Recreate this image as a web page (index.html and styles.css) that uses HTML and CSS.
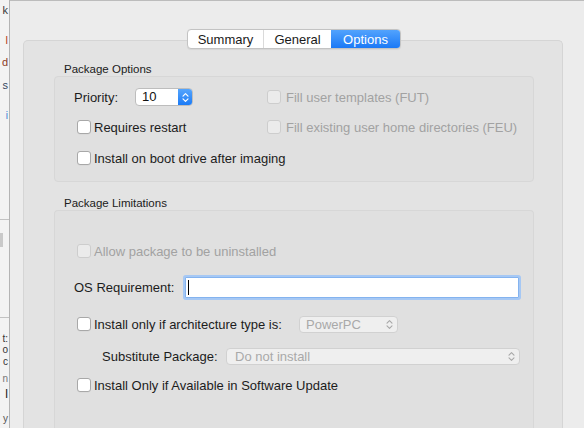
FILE: index.html
```html
<!DOCTYPE html>
<html>
<head>
<meta charset="utf-8">
<link rel="stylesheet" href="styles.css">
</head>
<body>
<div class="desk">
  <div class="behind">
    <span class="frag f1">k</span>
    <span class="frag f2">l</span>
    <span class="frag f3">d</span>
    <span class="frag f4">s</span>
    <span class="frag f5">i</span>
    <span class="rule r1"></span>
    <span class="blk"></span>
    <span class="rule r2"></span>
    <span class="frag f6">t:</span>
    <span class="frag f7">o</span>
    <span class="frag f8">c</span>
    <span class="frag f9">n</span>
    <span class="frag f10">l</span>
    <span class="frag f11">y</span>
  </div>
  <div class="window">
    <div class="tabs-row">
      <div class="seg">
        <span class="tab t-sum">Summary</span>
        <span class="tab t-gen">General</span>
        <span class="tab t-opt on">Options</span>
      </div>
    </div>
    <div class="panel">
      <div class="group">
        <div class="gtitle">Package Options</div>
        <div class="gbox box1">
          <div class="row">
            <span class="lbl-pri">Priority:</span>
            <div class="stepper">
              <span class="val">10</span>
              <span class="arrows">
                <svg width="7" height="11" viewBox="0 0 7 11"><path d="M1 4.2 L3.5 1.7 L6 4.2 M1 6.8 L3.5 9.3 L6 6.8" fill="none" stroke="#fff" stroke-width="1.2" stroke-linecap="round" stroke-linejoin="round"/></svg>
              </span>
            </div>
          </div>
          <div class="row"><span class="cb dis"></span><span class="dis-t">Fill user templates (FUT)</span></div>
          <div class="row ind"><span class="cb"></span><span>Requires restart</span></div>
          <div class="row"><span class="cb dis"></span><span class="dis-t">Fill existing user home directories (FEU)</span></div>
          <div class="row ind r3"><span class="cb"></span><span>Install on boot drive after imaging</span></div>
        </div>
      </div>
      <div class="group grow">
        <div class="gtitle">Package Limitations</div>
        <div class="gbox box2">
          <div class="row ind"><span class="cb dis"></span><span class="dis-t">Allow package to be uninstalled</span></div>
          <div class="row os">
            <span class="lbl-os">OS Requirement:</span>
            <div class="field"><span class="caret"></span></div>
          </div>
          <div class="row ind arch">
            <span class="cb"></span><span class="archlbl">Install only if architecture type is:</span>
            <div class="popup p-arch"><span>PowerPC</span>
              <svg width="7" height="11" viewBox="0 0 7 11"><path d="M1 4.2 L3.5 1.7 L6 4.2 M1 6.8 L3.5 9.3 L6 6.8" fill="none" stroke="#a8a8a8" stroke-width="1.1" stroke-linecap="round" stroke-linejoin="round"/></svg>
            </div>
          </div>
          <div class="row subst">
            <span class="lbl-sub">Substitute Package:</span>
            <div class="popup p-sub"><span>Do not install</span>
              <svg width="7" height="11" viewBox="0 0 7 11"><path d="M1 4.2 L3.5 1.7 L6 4.2 M1 6.8 L3.5 9.3 L6 6.8" fill="none" stroke="#a8a8a8" stroke-width="1.1" stroke-linecap="round" stroke-linejoin="round"/></svg>
            </div>
          </div>
          <div class="row ind sw"><span class="cb"></span><span>Install Only if Available in Software Update</span></div>
        </div>
      </div>
    </div>
  </div>
</div>
</body>
</html>
```
FILE: styles.css
```css
* { box-sizing: border-box; }
html, body { margin: 0; padding: 0; }
body {
  width: 584px;
  height: 428px;
  overflow: hidden;
  background: #ececec;
  font-family: "Liberation Sans", Arial, sans-serif;
  font-size: 13px;
  color: #1c1c1c;
}
.desk { display: flex; height: 428px; }

/* background window strip */
.behind {
  width: 10px;
  flex: none;
  position: relative;
  overflow: hidden;
  background: #f3f3f3;
  border-right: 1px solid #b4b4b4;
}
.frag {
  position: absolute;
  right: 1px;
  white-space: nowrap;
  font-size: 11px;
  line-height: 9px;
  color: #333;
}
.f1 { top: 6px; color: #3a3a3a; }
.f2 { top: 36px; color: #b23f1b; }
.f3 { top: 58px; color: #8a3b1e; }
.f4 { top: 81px; color: #34455f; }
.f5 { top: 111px; color: #3b7fd4; font-size: 10px; }
.f6 { top: 334px; font-size: 10px; }
.f7 { top: 345px; font-size: 10px; }
.f8 { top: 357px; font-size: 10px; }
.f9 { top: 374px; font-size: 10px; color: #777; }
.f10 { top: 389px; color: #111; font-size: 12px; line-height: 11px; }
.f11 { top: 414px; font-size: 10px; color: #555; }
.rule { position: absolute; left: 0; right: 0; height: 1px; background: #c2c2c2; }
.r1 { top: 219px; }
.r2 { top: 317px; }
.blk { position: absolute; left: 0; width: 3px; top: 233px; height: 14px; background: #c9c9c9; }

/* main window */
.window {
  flex: 1;
  min-width: 0;
  border-top: 1px solid #bcbcbc;
  display: flex;
  flex-direction: column;
}
.tabs-row {
  display: flex;
  justify-content: center;
  margin: 28px 21px 0 13px;
  padding-left: 2px;
  position: relative;
  z-index: 2;
}
.seg {
  display: flex;
  height: 20px;
  border: 1px solid #c3c3c3;
  border-radius: 4px;
  background: #fff;
  overflow: hidden;
  box-shadow: 0 0.5px 1px rgba(0,0,0,0.06);
}
.tab {
  display: flex;
  align-items: center;
  justify-content: center;
  height: 18px;
  font-size: 13px;
  color: #1a1a1a;
}
.t-sum { width: 76px; border-right: 1px solid #dadada; }
.t-gen { width: 67px; }
.t-opt { width: 69px; }
.tab.on {
  color: #fff;
  background: linear-gradient(#52a3fd, #1b79f6);
}

.panel {
  flex: 1;
  margin: -9px 21px 0 13px;
  background: #e3e3e3;
  border: 1px solid #d5d5d5;
  border-bottom: none;
  border-radius: 5px 5px 0 0;
  padding: 21px 28px 0 30px;
  display: flex;
  flex-direction: column;
}
.group { display: flex; flex-direction: column; }
.group + .group { margin-top: 14px; }
.group.grow { flex: 1; }
.gtitle {
  font-size: 11.5px;
  line-height: 14px;
  height: 14px;
  padding-left: 10px;
  color: #202020;
}
.gbox {
  background: #e0e0e0;
  border: 1px solid #d7d7d7;
  border-radius: 4px;
}
.box1 {
  display: grid;
  grid-template-columns: 193px auto;
  grid-template-rows: 18px 18px 18px;
  row-gap: 12px;
  padding: 11px 0 15px 19px;
}
.box2 {
  flex: 1;
  border-bottom: none;
  border-radius: 4px 4px 0 0;
  padding: 31px 0 0 19px;
  display: flex;
  flex-direction: column;
}
.row {
  display: flex;
  align-items: center;
  height: 18px;
  white-space: nowrap;
}
.row.ind .cb { margin-left: 3px; }
.row.r3 { margin-top: 1px; }

.cb {
  flex: none;
  width: 14px;
  height: 14px;
  margin-right: 3px;
  border: 1px solid #a8a8a8;
  border-radius: 3px;
  background: #fff;
  box-shadow: 0 0.5px 0.5px rgba(0,0,0,0.05);
}
.cb.dis {
  border-color: #cdcdcd;
  background: #ebebeb;
  box-shadow: none;
}
.dis-t { color: #a2a2a2; }
.box1 .row .cb.dis { margin-right: 5px; }

.lbl-pri { width: 61px; }
.stepper {
  display: flex;
  width: 58px;
  height: 18px;
  border: 1px solid #bdbdbd;
  border-radius: 4px;
  background: #fff;
  overflow: hidden;
}
.stepper .val { flex: 1; padding-left: 6px; line-height: 16px; font-size: 13px; color: #111; }
.stepper .arrows {
  width: 14px;
  display: flex;
  align-items: center;
  justify-content: center;
  background: linear-gradient(#55a5fd, #1c7bf6);
}

.row.os { margin-top: 17px; height: 21px; }
.lbl-os { width: 111px; }
.field {
  width: 334px;
  height: 21px;
  background: #fff;
  border: 1px solid #84b3ef;
  box-shadow: 0 0 0 2px #a6c8f4;
  border-radius: 1px;
  display: flex;
  align-items: center;
}
.caret { width: 1px; height: 15px; background: #000; margin-left: 2px; }

.row.arch { margin-top: 17px; }
.archlbl { width: 205px; }
.popup {
  height: 17px;
  border: 1px solid #d1d1d1;
  border-radius: 4px;
  background: #efefef;
  color: #a9a9a9;
  display: flex;
  align-items: center;
  justify-content: space-between;
  padding: 0 4px 0 7px;
  font-size: 13px;
}
.p-arch { width: 99px; padding-left: 6px; }
.row.subst { margin-top: 14px; padding-left: 28px; }
.lbl-sub { width: 124px; color: #1c1c1c; }
.p-sub { width: 294px; padding-left: 8px; }
.row.sw { margin-top: 11px; }
```
